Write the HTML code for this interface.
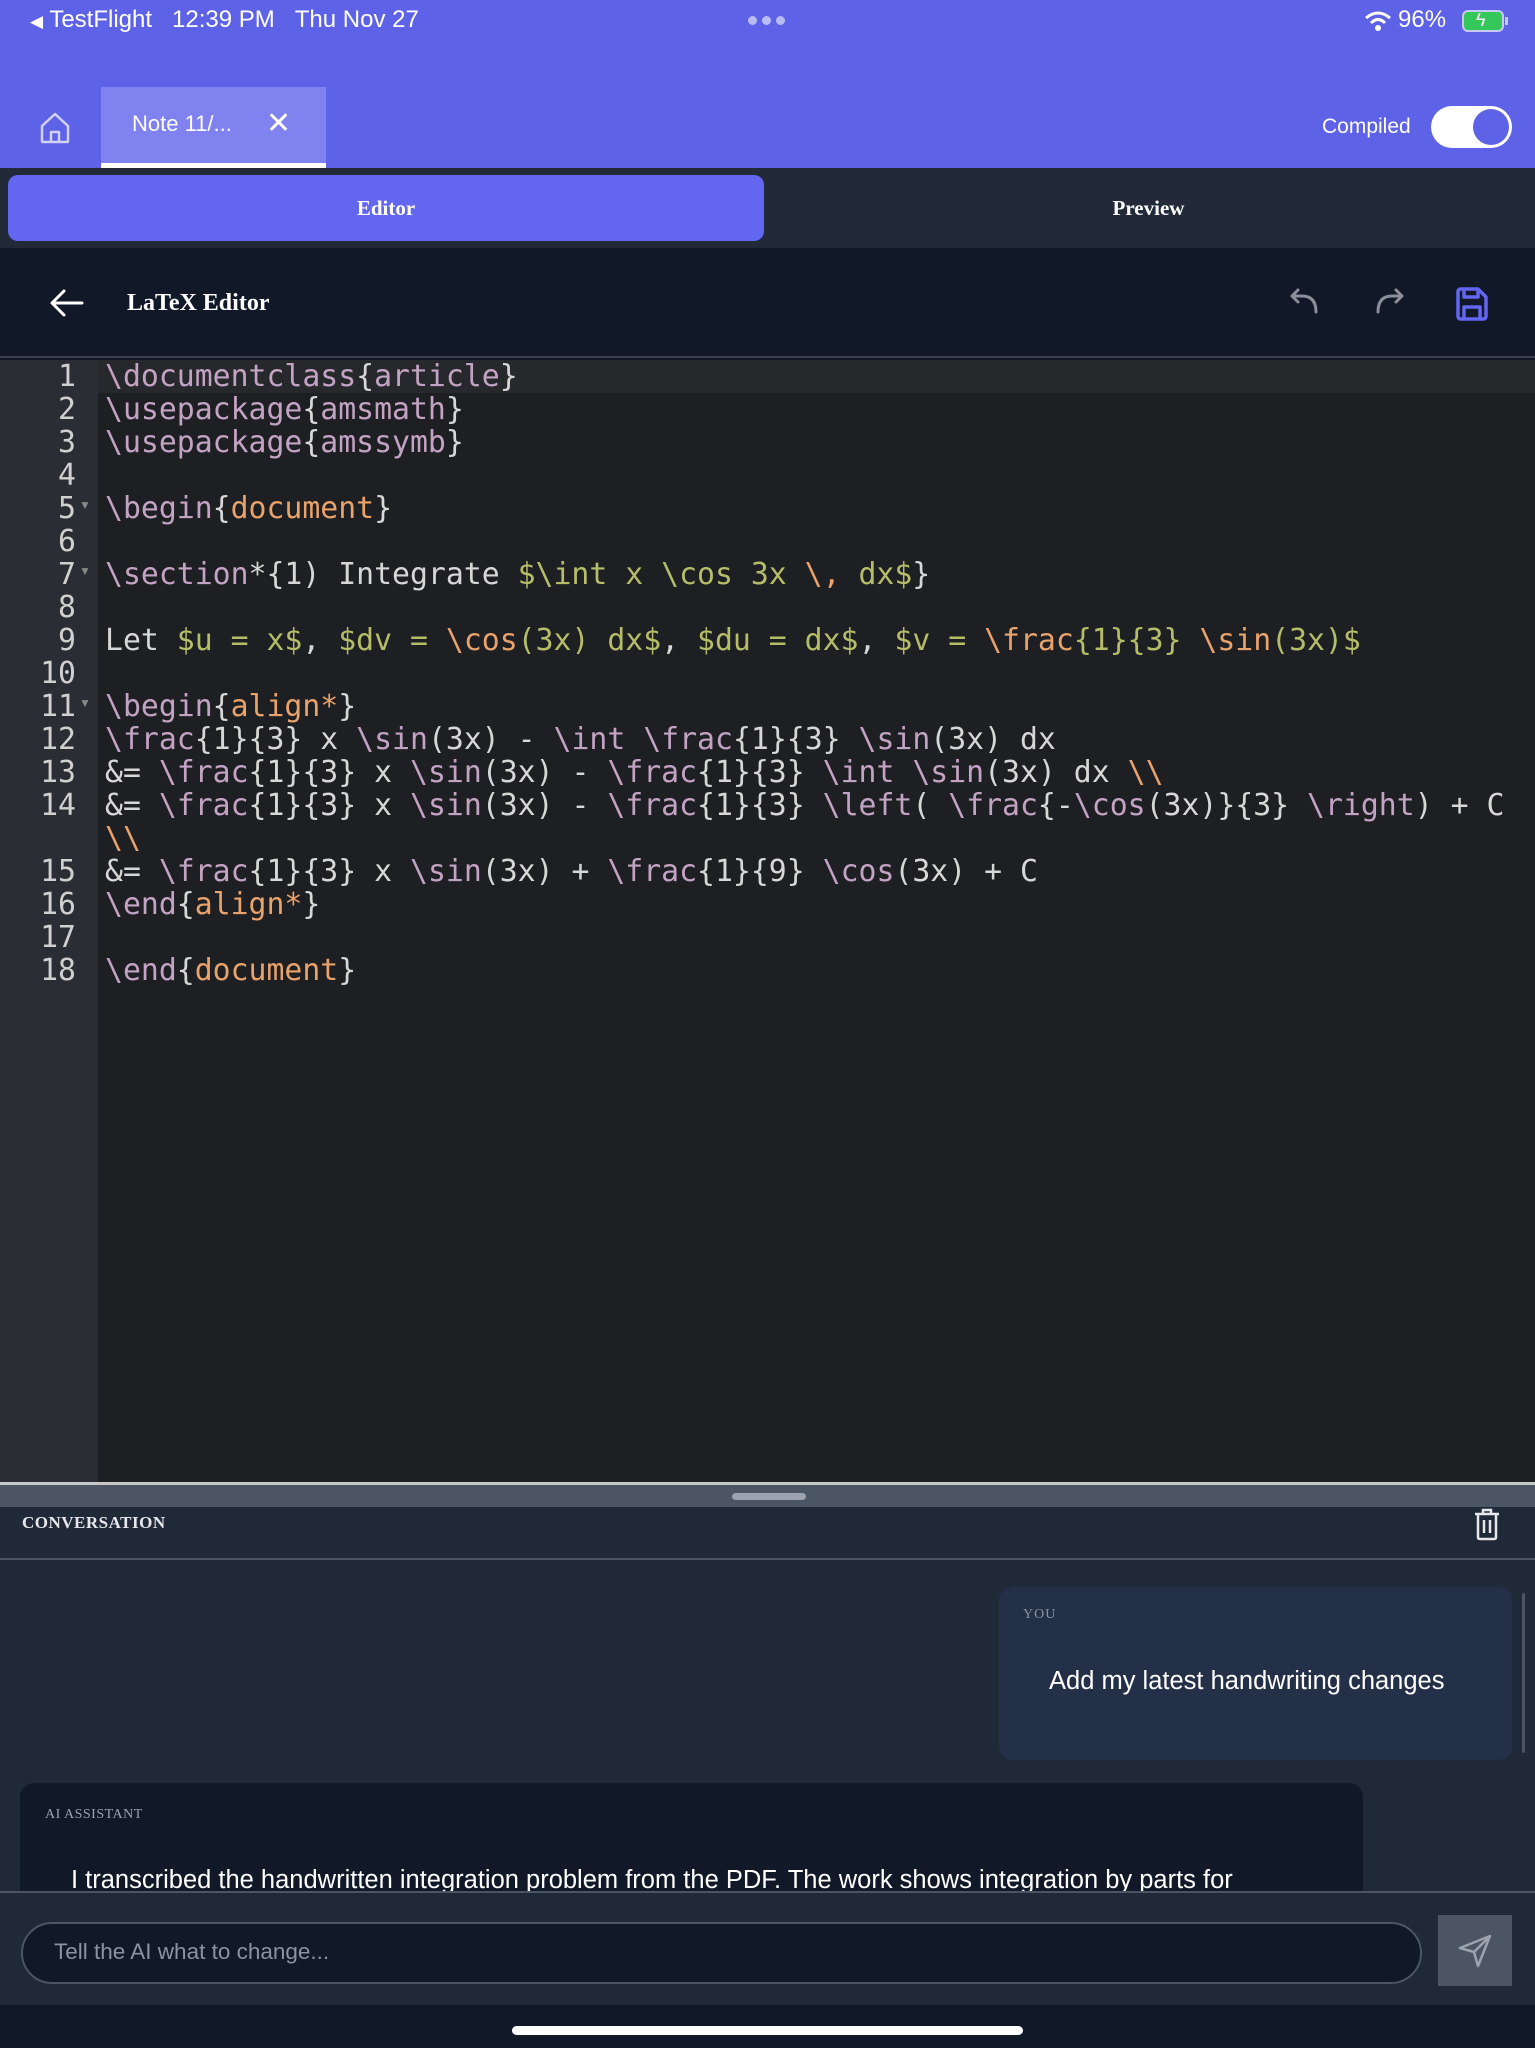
<!DOCTYPE html>
<html><head><meta charset="utf-8"><style>
*{margin:0;padding:0;box-sizing:border-box}
body{width:1535px;height:2048px;overflow:hidden;background:#111827;font-family:"Liberation Sans",sans-serif;position:relative}
.abs{position:absolute}
#top{left:0;top:0;width:1535px;height:168px;background:#5d62e6}
.st{top:6px;font-size:24px;color:#fff}
#seg{left:0;top:168px;width:1535px;height:80px;background:#222a3a}
#hdr{left:0;top:248px;width:1535px;height:110px;background:#111827;border-bottom:2px solid #3a3f4a}
#ed{left:0;top:360px;width:1535px;height:1124px;background:#1e1f22}
#gut{left:0;top:360px;width:98px;height:1124px;background:#2a2d33}
.code{font-family:"DejaVu Sans Mono","Liberation Mono",monospace;font-size:29.8px;line-height:33px;white-space:pre;color:#d7d7d7}
.ln{left:0;width:76px;text-align:right;color:#d0d0d0}
.p{color:#c3a3c3}.o{color:#e8a26b}.g{color:#b5bd68}
.fold{font-size:12px;color:#888}
</style></head><body>
<div id="top" class="abs"></div>
<div class="abs st" style="left:30px"><span style="font-size:17px">◀</span> TestFlight&nbsp;&nbsp; 12:39 PM &nbsp;&nbsp;Thu Nov 27</div>
<div class="abs" style="left:748px;top:16px;width:40px;height:10px">
<span class="abs" style="left:0;top:0;width:9px;height:9px;border-radius:50%;background:#b9bbf5"></span>
<span class="abs" style="left:14px;top:0;width:9px;height:9px;border-radius:50%;background:#b9bbf5"></span>
<span class="abs" style="left:28px;top:0;width:9px;height:9px;border-radius:50%;background:#b9bbf5"></span></div>
<svg class="abs" style="left:1364px;top:10px" width="28" height="22" viewBox="0 0 28 22"><path d="M2 8 Q14 -2 26 8" stroke="#fff" stroke-width="3" fill="none"/><path d="M7 13 Q14 6 21 13" stroke="#fff" stroke-width="3" fill="none"/><circle cx="14" cy="18" r="3" fill="#fff"/></svg>
<div class="abs st" style="left:1398px">96%</div>
<div class="abs" style="left:1462px;top:10px;width:42px;height:22px;border:2px solid #c8caf5;border-radius:6px;background:#35c759"><span class="abs" style="left:12px;top:-2px;color:#fff;font-size:18px">ϟ</span></div>
<div class="abs" style="left:1505px;top:17px;width:3px;height:8px;background:#c8caf5"></div>
<svg class="abs" style="left:38px;top:111px" width="34" height="34" viewBox="0 0 34 34"><path d="M4 15 L17 3 L30 15 V30 Q30 31 29 31 H5 Q4 31 4 30 Z M13 31 V21 H21 V31" stroke="#d0d2f7" stroke-width="2.5" fill="none" stroke-linejoin="round"/></svg>
<div class="abs" style="left:101px;top:87px;width:225px;height:81px;background:#7f82ef"></div>
<div class="abs" style="left:101px;top:163px;width:225px;height:5px;background:#fff"></div>
<div class="abs" style="left:132px;top:111px;font-size:22px;color:#fff">Note 11/...</div>
<div class="abs" style="left:266px;top:106px;font-size:30px;color:#fff;font-weight:300">✕</div>
<div class="abs" style="left:1322px;top:115px;font-size:21px;color:#fff">Compiled</div>
<div class="abs" style="left:1431px;top:106px;width:81px;height:42px;border-radius:21px;background:#fff"><span class="abs" style="left:42px;top:3px;width:36px;height:36px;border-radius:50%;background:#5d62e6"></span></div>

<div id="seg" class="abs"></div>
<div class="abs" style="left:8px;top:175px;width:756px;height:66px;border-radius:10px;background:#6366f1;color:#fff;font:bold 21px 'Liberation Serif',serif;text-align:center;line-height:66px">Editor</div>
<div class="abs" style="left:770px;top:175px;width:757px;height:66px;color:#fff;font:bold 21px 'Liberation Serif',serif;text-align:center;line-height:66px">Preview</div>

<div id="hdr" class="abs"></div>
<svg class="abs" style="left:48px;top:288px" width="38" height="30" viewBox="0 0 38 30"><path d="M34 15 H5 M16 3 L4 15 L16 27" stroke="#fff" stroke-width="3" fill="none" stroke-linecap="round" stroke-linejoin="round"/></svg>
<div class="abs" style="left:127px;top:290px;font:bold 24px 'Liberation Serif',serif;color:#fff">LaTeX Editor</div>
<svg class="abs" style="left:1288px;top:288px" width="36" height="28" viewBox="0 0 36 28"><path d="M28 24 Q28 8 14 8 H4 M10 2 L4 8 L10 14" stroke="#8a8f9a" stroke-width="3" fill="none" stroke-linecap="round" stroke-linejoin="round"/></svg>
<svg class="abs" style="left:1372px;top:288px" width="36" height="28" viewBox="0 0 36 28"><path d="M6 24 Q6 8 20 8 H30 M24 2 L30 8 L24 14" stroke="#8a8f9a" stroke-width="3" fill="none" stroke-linecap="round" stroke-linejoin="round"/></svg>
<svg class="abs" style="left:1454px;top:286px" width="36" height="36" viewBox="0 0 36 36"><path d="M4 6 Q4 3 7 3 H24 L32 11 V30 Q32 33 29 33 H7 Q4 33 4 30 Z M10 3 V11 H24 V3 M10 33 V21 H26 V33" stroke="#6366f1" stroke-width="3.5" fill="none" stroke-linejoin="round"/></svg>

<div id="ed" class="abs"></div>
<div id="gut" class="abs"></div>
<div class="abs" style="left:98px;top:360px;width:1437px;height:33px;background:#26282c"></div>
<div class="abs code ln" style="top:360px">1
2
3
4
5
6
7
8
9
10
11
12
13
14

15
16
17
18</div>
<div class="abs fold" style="left:79px;top:498px">▼</div>
<div class="abs fold" style="left:79px;top:564px">▼</div>
<div class="abs fold" style="left:79px;top:696px">▼</div>
<div class="abs code" style="left:105px;top:360px"><span class="p">\documentclass</span>{<span class="p">article</span>}
<span class="p">\usepackage</span>{<span class="p">amsmath</span>}
<span class="p">\usepackage</span>{<span class="p">amssymb</span>}

<span class="p">\begin</span>{<span class="o">document</span>}

<span class="p">\section</span>*{1) Integrate <span class="g">$\int x \cos 3x </span><span class="o">\,</span><span class="g"> dx$</span>}

Let <span class="g">$u = x$</span>, <span class="g">$dv = </span><span class="o">\cos</span><span class="g">(3x) dx$</span>, <span class="g">$du = dx$</span>, <span class="g">$v = </span><span class="o">\frac</span><span class="g">{1}{3} </span><span class="o">\sin</span><span class="g">(3x)$</span>

<span class="p">\begin</span>{<span class="o">align*</span>}
<span class="p">\frac</span>{1}{3} x <span class="p">\sin</span>(3x) - <span class="p">\int</span> <span class="p">\frac</span>{1}{3} <span class="p">\sin</span>(3x) dx
&amp;= <span class="p">\frac</span>{1}{3} x <span class="p">\sin</span>(3x) - <span class="p">\frac</span>{1}{3} <span class="p">\int</span> <span class="p">\sin</span>(3x) dx <span class="o">\\</span>
&amp;= <span class="p">\frac</span>{1}{3} x <span class="p">\sin</span>(3x) - <span class="p">\frac</span>{1}{3} <span class="p">\left</span>( <span class="p">\frac</span>{-<span class="p">\cos</span>(3x)}{3} <span class="p">\right</span>) + C
<span class="o">\\</span>
&amp;= <span class="p">\frac</span>{1}{3} x <span class="p">\sin</span>(3x) + <span class="p">\frac</span>{1}{9} <span class="p">\cos</span>(3x) + C
<span class="p">\end</span>{<span class="o">align*</span>}

<span class="p">\end</span>{<span class="o">document</span>}</div>

<div class="abs" style="left:0;top:1482px;width:1535px;height:3px;background:#c8c8c8"></div>
<div class="abs" style="left:0;top:1485px;width:1535px;height:22px;background:#4b5563"></div>
<div class="abs" style="left:732px;top:1493px;width:74px;height:7px;border-radius:4px;background:#9ca3af"></div>
<div class="abs" style="left:0;top:1507px;width:1535px;height:385px;background:#1f2937"></div>
<div class="abs" style="left:22px;top:1513px;font:bold 17px 'Liberation Serif',serif;color:#e5e7eb;letter-spacing:0.5px">CONVERSATION</div>
<svg class="abs" style="left:1473px;top:1507px" width="28" height="34" viewBox="0 0 28 34"><path d="M2 7 H26 M10 7 V3 H18 V7 M5 7 V30 Q5 32 7 32 H21 Q23 32 23 30 V7 M11 13 V26 M17 13 V26" stroke="#e5e7eb" stroke-width="2.5" fill="none"/></svg>
<div class="abs" style="left:0;top:1558px;width:1535px;height:2px;background:#4b5563"></div>

<div class="abs" style="left:999px;top:1587px;width:513px;height:173px;border-radius:14px;background:#243047"></div>
<div class="abs" style="left:1023px;top:1607px;font:14px 'Liberation Serif',serif;color:#8b93a3;letter-spacing:1px">YOU</div>
<div class="abs" style="left:1049px;top:1667px;font-size:25.5px;color:#fff">Add my latest handwriting changes</div>
<div class="abs" style="left:1522px;top:1593px;width:3px;height:160px;background:#4b5563;border-radius:2px"></div>

<div class="abs" style="left:20px;top:1783px;width:1343px;height:109px;border-radius:14px 14px 0 0;background:#111827;overflow:hidden">
<div class="abs" style="left:25px;top:24px;font:14px 'Liberation Serif',serif;color:#9ca3af;letter-spacing:0.5px">AI ASSISTANT</div>
<div class="abs" style="left:51px;top:83px;font-size:25.5px;color:#fff;white-space:nowrap">I transcribed the handwritten integration problem from the PDF. The work shows integration by parts for</div>
</div>
<div class="abs" style="left:0;top:1891px;width:1535px;height:2px;background:#4b5563"></div>
<div class="abs" style="left:0;top:1893px;width:1535px;height:112px;background:#1f2937"></div>
<div class="abs" style="left:21px;top:1922px;width:1401px;height:62px;border-radius:31px;background:#111827;border:2px solid #4b5563"></div>
<div class="abs" style="left:54px;top:1939px;font-size:22.5px;color:#8b93a3">Tell the AI what to change...</div>
<div class="abs" style="left:1438px;top:1915px;width:74px;height:71px;background:#4b5563"></div>
<svg class="abs" style="left:1456px;top:1932px" width="38" height="38" viewBox="0 0 38 38"><path d="M34 4 L4 16 L18 20 L22 34 Z M18 20 L34 4" stroke="#9ca3af" stroke-width="2.5" fill="none" stroke-linejoin="round"/></svg>
<div class="abs" style="left:512px;top:2026px;width:511px;height:9px;border-radius:5px;background:#fff"></div>
</body></html>
